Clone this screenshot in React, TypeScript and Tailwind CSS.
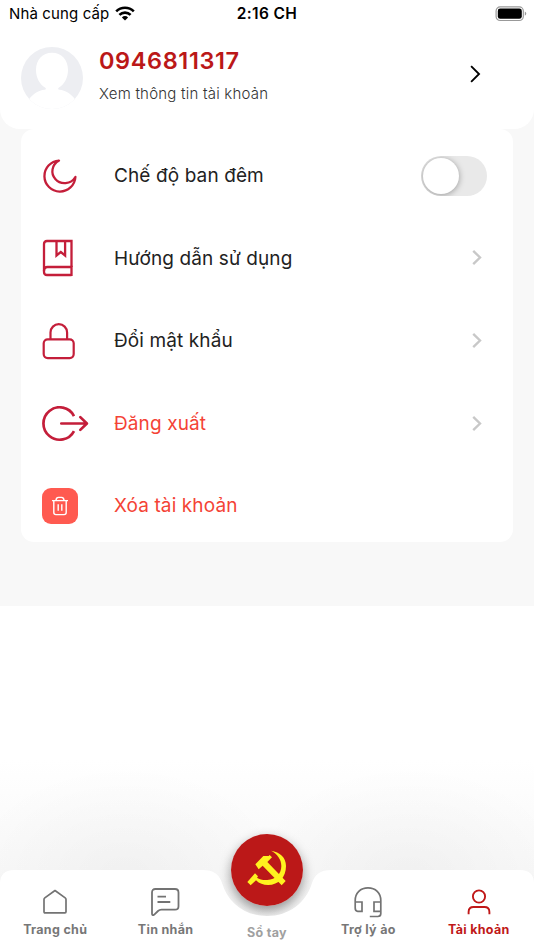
import type { ReactNode } from "react";
import { clsx } from "clsx";

// ----- Icons -----

function WifiIcon() {
  return (
    <svg width="20" height="15" viewBox="0 0 20 15" fill="none" stroke="#000" strokeWidth="2.6" className="mb-0.5">
      <path d="M1.2 5.4a12.6 12.6 0 0 1 17.6 0" />
      <path d="M4.4 8.9a8 8 0 0 1 11.2 0" />
      <path d="M10 14.6 6.9 11.4a4.4 4.4 0 0 1 6.2 0Z" fill="#000" stroke="none" />
    </svg>
  );
}

function BatteryIcon() {
  return (
    <svg width="32" height="16" viewBox="0 0 32 16" className="mb-px">
      <rect x="1.1" y="0.9" width="27.2" height="13.6" rx="4" fill="none" stroke="#999" strokeWidth="1.2" />
      <rect x="2.8" y="2.6" width="24" height="10.2" rx="2.4" />
      <path d="M29.8 5.6c2 .8 2 3.4 0 4.2Z" fill="#999" />
    </svg>
  );
}

function Avatar() {
  return (
    <svg width="62" height="62" viewBox="0 0 62 62">
      <defs>
        <clipPath id="avatar">
          <circle cx="31" cy="31" r="31" />
        </clipPath>
      </defs>
      <g clipPath="url(#avatar)">
        <rect width="62" height="62" fill="#edeef2" />
        <path
          d="M31 5.7c-9.5 0-16 6.8-16 17.3 0 8 4 14.500 9 17.500 1.500 1 1 2-.5 2.200-6 .7-11 3.800-15 8.800V62h45V51.500c-4-5-9-8.100-15-8.800-1.500-.2-2-1.200-.5-2.200 5-3 9-9.500 9-17.500 0-10.500-6.500-17.300-16-17.300Z"
          fill="#fff"
        />
      </g>
    </svg>
  );
}

function MoonIcon() {
  return (
    <svg width="36" height="36" viewBox="0 0 36 36" fill="none" stroke="#c41e3a" strokeWidth="2.3" strokeLinejoin="round">
      <path d="M17 2.600A15.500 15.500 0 1 0 33.400 19C29 26.500 18.500 27 13.300 21 8.500 15.500 9.500 7 17 2.600Z" />
    </svg>
  );
}

function BookIcon() {
  return (
    <svg width="32" height="38" viewBox="0 0 32 38" fill="none" stroke="#c41e3a" strokeWidth="2.3">
      <path d="M29.500 28V2H5Q2 2 2 5v28q0 3 3 3h24.500" />
      <path d="M2 32q0-4 3.500-4h24v9.100" />
      <path d="M14.500 2v14.500l4.300-3.500 4.300 3.500V2" />
    </svg>
  );
}

function LockIcon() {
  return (
    <svg width="34" height="38" viewBox="0 0 34 38" fill="none" stroke="#c41e3a" strokeWidth="2.2">
      <rect x="1.700" y="17.300" width="30" height="18.800" rx="4" />
      <path d="M8.500 17.300V10.500a8.200 8.200 0 0 1 16.600 0v6.800" />
    </svg>
  );
}

function LogoutIcon() {
  return (
    <svg width="48" height="36" viewBox="0.500 0.500 48 36" fill="none" stroke="#c41e3a" strokeWidth="2.700" strokeLinecap="round" strokeLinejoin="round">
      <path d="M32.500 10.500a16.200 16.200 0 1 0 0 15" strokeLinecap="butt" />
      <path d="M19.800 18h25.400M38.800 11.600l6.600 6.400-6.600 6.400" />
    </svg>
  );
}

function TrashIcon() {
  return (
    <div className="-ml-[0.500px] flex size-9 items-center justify-center rounded-[9px] bg-[#ff5a50]">
      <svg width="18" height="20" viewBox="0 0 18 20" fill="none" stroke="#fff" strokeWidth="1.400">
        <path d="M1 4.600h16M5 4.600Q5 1.400 7.500 1.400h3q2.500 0 2.500 3.200" />
        <path d="M2.800 4.600V16.500q0 2.100 2.100 2.100h8.200q2.100 0 2.100-2.100V4.600M7.200 8.200v6.500M10.800 8.200v6.500" />
      </svg>
    </div>
  );
}

function HomeIcon() {
  return (
    <svg width="24" height="26" viewBox="0 0 24 26" fill="none" stroke="#737373" strokeWidth="1.700" strokeLinejoin="round">
      <path d="M1 10.500q0-1 .8-1.600L12 1.500l10.200 7.400q.8.600.8 1.600V22.800q0 1-1 1H2q-1 0-1-1Z" />
    </svg>
  );
}

function ChatIcon() {
  return (
    <svg width="30" height="30" viewBox="0.500 0 30 30" fill="none" stroke="#737373" strokeWidth="1.800" strokeLinejoin="round">
      <path d="M1.500 5.500Q1.500 2 5 2h19.500Q28 2 28 5.500v13.700q0 3.500-3.500 3.500H11q-2 0-3.500 1.300L3.500 27.800Q1.500 29 1.500 26.500Z" />
      <path d="M7 9.700h8.500M7 15h12.800" />
    </svg>
  );
}

function HeadsetIcon() {
  return (
    <svg width="30" height="32" viewBox="0 0 30 32" fill="none" stroke="#737373" strokeWidth="1.700">
      <path d="M2.200 22V14.500C2.200 7 7.500 1.900 15 1.900s12.800 5.100 12.800 12.600v13q0 3-3 3h-8" />
      <path d="M2.200 16H9v9.300H4.700q-2.500 0-2.500-3.300M27.800 16H21v9.300h6.800" />
    </svg>
  );
}

function UserIcon() {
  return (
    <svg width="24" height="26" viewBox="0 0 24 26" fill="none" stroke="#c01818" strokeWidth="1.900">
      <circle cx="12" cy="7.500" r="6.100" />
      <path d="M1.600 25.300v-2.300q0-5 5-5h10.800q5 0 5 5v2.300" />
    </svg>
  );
}

function HammerSickleIcon() {
  return (
    <svg width="46" height="42" viewBox="0 0 138 126" fill="#fff21f" className="mb-[5px]">
      <path d="M81 11C108 15 126 31 126 57c0 34-22 57-54 57-14 0-26-4-36-14l-16 15-10-10 23-26 9 9-3 4c8 6 20 8 31 7 25-2 42-18 42-42 0-20-12-36-31-46Z" />
      <path d="m34 52 24-25h16l3-3 7 7-14 14 55 57-12 13-57-59-12 11Z" />
    </svg>
  );
}

function Chevron({ className }: { className?: string }) {
  return (
    <svg width="10" height="18" viewBox="0 0 10 18" fill="none" stroke="currentColor" className={className}>
      <path d="m1 1.900 7.200 7.100L1 16.100" />
    </svg>
  );
}

// ----- Menu -----

function MenuRow({ icon, label, danger, children }: { icon: ReactNode; label: string; danger?: boolean; children?: ReactNode }) {
  return (
    <div className="flex flex-1 items-center pt-[11px] pl-[21px]">
      <div className="w-[72px]">{icon}</div>
      <span className={clsx("flex-1 pt-px text-[19px] tracking-[0.110px]", danger ? "text-[#f44336]" : "text-[#222]")}>{label}</span>
      {children}
    </div>
  );
}

function RowArrow() {
  return <Chevron className="mb-px mr-[31px] h-[17px] stroke-[2.500] text-[#c8c8c8]" />;
}

function Toggle() {
  return (
    <div className="mr-[26px] flex h-10 w-[66px] items-center overflow-hidden rounded-full bg-[#e9e9e9] pl-0.5">
      <div className="size-9 rounded-full bg-white shadow-[0_1px_6px_rgba(0,0,0,0.35)]" />
    </div>
  );
}

// ----- Tab bar -----

function Tab({ icon, label, active }: { icon: ReactNode; label: string; active?: boolean }) {
  return (
    <div className="flex w-[110.400px] flex-col items-center pt-4">
      <div className="flex h-8 items-center justify-center">{icon}</div>
      <span className={clsx("mt-[3px] text-[12.500px] leading-[18px] font-bold tracking-[0.300px]", active ? "text-[#c01818]" : "text-[#777]")}>
        {label}
      </span>
    </div>
  );
}

function TabBar() {
  return (
    <div className="relative h-20">
      <div className="absolute inset-x-0 bottom-0 h-[190px] bg-[radial-gradient(ellipse_160px_110px_at_125px_115px,#00000008,transparent),radial-gradient(ellipse_160px_110px_at_409px_115px,#00000008,transparent),linear-gradient(to_bottom,#fff,#f8f8f8_110px,#f3f3f3)]" />
      <div className="absolute top-[-36px] left-[231px] size-[72px] rounded-full shadow-[0_5px_12px_rgba(0,0,0,0.4)]" />
      <div className="relative flex h-20 bg-white [clip-path:path('M0_14Q0_0_14_0H203Q218_0_222_13C228_33_245_46_267_46S306_33_312_13Q316_0_331_0H520Q534_0_534_14V80H0Z')]">
        <Tab icon={<HomeIcon />} label="Trang chủ" />
        <Tab icon={<ChatIcon />} label="Tin nhắn" />
        <div className="flex flex-1 items-end justify-center pb-2">
          <span className="text-[12.500px] leading-[18px] font-bold tracking-[0.300px] text-[#a0a0a0]">Sổ tay</span>
        </div>
        <Tab icon={<HeadsetIcon />} label="Trợ lý ảo" />
        <Tab icon={<UserIcon />} label="Tài khoản" active />
      </div>
      <div className="absolute top-[-36px] left-[231px] flex size-[72px] items-center justify-center rounded-full bg-[#bb1818]">
        <HammerSickleIcon />
      </div>
    </div>
  );
}

export default function App() {
  return (
    <div className="flex h-[950px] w-[534px] flex-col overflow-hidden bg-white font-['Inter','Noto_Sans',sans-serif]">
      <div className="flex h-[606px] flex-col bg-[#f8f8f8]">
        <header className="h-[129px] rounded-b-[20px] bg-white">
          <div className="grid h-7 grid-cols-3 items-center px-[9px] text-[15px] text-black">
            <div className="flex items-center gap-1.5">
              <span className="tracking-[0.130px] whitespace-nowrap">Nhà cung cấp</span>
              <WifiIcon />
            </div>
            <span className="text-center text-[15.500px] font-semibold tracking-[0.350px]">2:16 CH</span>
            <div className="-mr-0.5 flex justify-end">
              <BatteryIcon />
            </div>
          </div>
          <div className="flex items-start pt-[19px] pl-[21px]">
            <Avatar />
            <div className="-mt-px ml-4 flex-1">
              <div className="text-[23.500px] leading-[30px] font-semibold tracking-[0.620px] text-[#bb1818]">0946811317</div>
              <div className="mt-2 text-[15px] leading-5 font-light tracking-[0.220px] text-[#333]">Xem thông tin tài khoản</div>
            </div>
            <Chevron className="mt-[17px] mr-[53px] h-5 w-[11px] stroke-[1.700] text-black" />
          </div>
        </header>

        <main className="mx-[21px] flex h-[413px] flex-col rounded-[13px] bg-white">
          <MenuRow icon={<MoonIcon />} label="Chế độ ban đêm">
            <Toggle />
          </MenuRow>
          <MenuRow icon={<BookIcon />} label="Hướng dẫn sử dụng">
            <RowArrow />
          </MenuRow>
          <MenuRow icon={<LockIcon />} label="Đổi mật khẩu">
            <RowArrow />
          </MenuRow>
          <MenuRow icon={<LogoutIcon />} label="Đăng xuất" danger>
            <RowArrow />
          </MenuRow>
          <MenuRow icon={<TrashIcon />} label="Xóa tài khoản" danger />
        </main>
      </div>
      <div className="flex-1" />
      <TabBar />
    </div>
  );
}
